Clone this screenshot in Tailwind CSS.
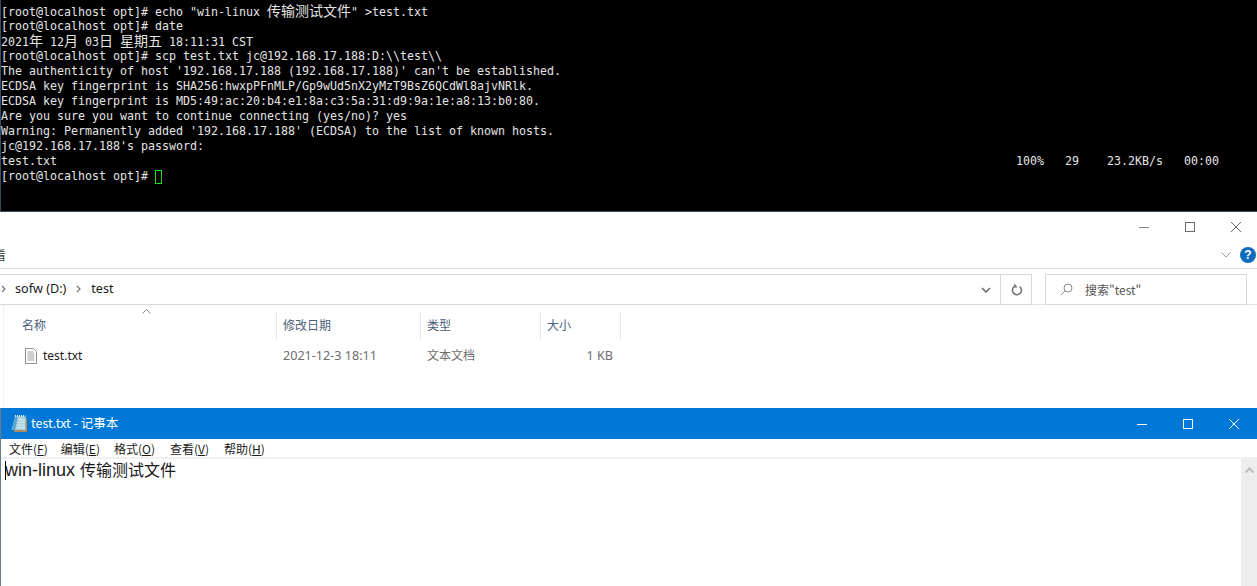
<!DOCTYPE html>
<html lang="zh"><head><meta charset="utf-8">
<script src="https://cdn.jsdelivr.net/npm/@tailwindcss/browser@4"></script>
</head>
<body class="w-[1257px] h-[586px] overflow-hidden bg-white flex flex-col font-['Noto_Sans_CJK_SC',sans-serif]">
<!-- terminal -->
<section class="h-[212px] shrink-0 bg-black border-b border-l border-[#3c4a5c] pt-[4px] text-[#e4e4e4] font-['DejaVu_Sans_Mono','Noto_Sans_CJK_SC',monospace] text-[11.63px] leading-[15px]">
<div class="h-[15px] whitespace-pre">[root@localhost opt]# echo "win-linux <span class="text-[14px]">传输测试文件</span>" &gt;test.txt</div>
<div class="h-[15px] whitespace-pre">[root@localhost opt]# date</div>
<div class="h-[15px] whitespace-pre">2021<span class="text-[14px]">年</span> 12<span class="text-[14px]">月</span> 03<span class="text-[14px]">日</span> <span class="text-[14px]">星期五</span> 18:11:31 CST</div>
<div class="h-[15px] whitespace-pre">[root@localhost opt]# scp test.txt jc@192.168.17.188:D:\\test\\</div>
<div class="h-[15px] whitespace-pre">The authenticity of host '192.168.17.188 (192.168.17.188)' can't be established.</div>
<div class="h-[15px] whitespace-pre">ECDSA key fingerprint is SHA256:hwxpPFnMLP/Gp9wUd5nX2yMzT9BsZ6QCdWl8ajvNRlk.</div>
<div class="h-[15px] whitespace-pre">ECDSA key fingerprint is MD5:49:ac:20:b4:e1:8a:c3:5a:31:d9:9a:1e:a8:13:b0:80.</div>
<div class="h-[15px] whitespace-pre">Are you sure you want to continue connecting (yes/no)? yes</div>
<div class="h-[15px] whitespace-pre">Warning: Permanently added '192.168.17.188' (ECDSA) to the list of known hosts.</div>
<div class="h-[15px] whitespace-pre">jc@192.168.17.188's password:</div>
<div class="h-[15px] flex whitespace-pre"><span class="w-[1015px]">test.txt</span><span>100%   29    23.2KB/s   00:00</span></div>
<div class="h-[15px] flex items-center whitespace-pre">[root@localhost opt]# <span class="w-[7px] h-[14px] border border-[#19e619]"></span></div>
</section>
<!-- explorer -->
<section class="h-[196px] shrink-0 bg-white flex flex-col relative">
  <div class="h-[30px] flex justify-end items-center shrink-0">
    <div class="flex items-center h-full mr-[-2px]">
      <svg class="w-[46px] h-[14px]" viewBox="0 0 46 14"><path d="M18 7.5h10" stroke="#8a8a8a" fill="none"/></svg>
      <svg class="w-[46px] h-[14px]" viewBox="0 0 46 14"><rect x="18.5" y="2.5" width="9" height="9" stroke="#6b6b6b" fill="none"/></svg>
      <svg class="w-[46px] h-[14px]" viewBox="0 0 46 14"><path d="M18 2l10 10M28 2L18 12" stroke="#6b6b6b" fill="none"/></svg>
    </div>
  </div>
  <div class="h-[27px] flex items-center justify-between shrink-0 border-b border-[#d9d9d9] pr-[1px]">
    <span class="text-[12px] text-[#333] w-[6px] overflow-hidden flex justify-end">看</span>
    <div class="flex items-center gap-[8px]">
      <svg class="w-[12px] h-[8px]" viewBox="0 0 12 8"><path d="M1.5 1.5L6 6l4.5-4.5" stroke="#9a9a9a" fill="none"/></svg>
      <span class="w-[16px] h-[16px] rounded-full bg-[#0f6cbd] text-white text-[12px] font-bold leading-[16px] text-center font-['Liberation_Sans',sans-serif]">?</span>
    </div>
  </div>
  <div class="h-[36px] flex items-start pt-[5px] shrink-0 border-b border-[#e3e3e3]">
    <div class="w-[1032px] h-[31px] border border-l-0 border-[#d9d9d9] flex items-center">
      <div class="flex-1 flex items-center text-[12.6px] text-[#1a1a1a] font-['Noto_Sans',sans-serif]">
        <svg class="w-[5px] h-[8px] ml-[1px] mr-[9px]" viewBox="0 0 5 8"><path d="M1 1l3 3-3 3" stroke="#777" stroke-width="1.2" fill="none"/></svg>
        <span>sofw (D:)</span>
        <svg class="w-[5px] h-[8px] ml-[10px] mr-[10px]" viewBox="0 0 5 8"><path d="M1 1l3 3-3 3" stroke="#777" stroke-width="1.2" fill="none"/></svg>
        <span>test</span>
      </div>
      <svg class="w-[10px] h-[6px] mr-[9px]" viewBox="0 0 10 6"><path d="M1 1l4 4 4-4" stroke="#666" stroke-width="1.5" fill="none"/></svg>
      <div class="w-[31px] h-full border-l border-[#d9d9d9] flex items-center justify-center pl-[1px]">
        <svg class="w-[12px] h-[13px]" viewBox="0 0 12 13"><path d="M3.6 3.4A4.5 4.5 0 1 0 8.6 3.6" stroke="#707070" stroke-width="1.5" fill="none"/><path d="M3.2 .6v4h3.6z" fill="#707070"/></svg>
      </div>
    </div>
    <div class="ml-[13px] w-[202px] h-[31px] border border-[#d9d9d9] flex items-center text-[12px] text-[#555]">
      <svg class="w-[13px] h-[13px] ml-[14px] mr-[12px]" viewBox="0 0 13 13"><circle cx="8" cy="5" r="4" stroke="#8a8a8a" fill="none"/><path d="M5 8L1 12" stroke="#a08a78" fill="none"/></svg>
      <span>搜索"test"</span>
    </div>
  </div>
  <div class="flex-1 ml-[3px] border-l border-[#f1f1f1] relative">
    <div class="flex h-[28px] mt-[7px] text-[12px] text-[#4c607a]">
      <div class="w-[273px] pl-[18px] leading-[26px] border-r border-[#e5e5e5]">名称</div>
      <div class="w-[144px] pl-[6px] leading-[26px] border-r border-[#e5e5e5]">修改日期</div>
      <div class="w-[120px] pl-[6px] leading-[26px] border-r border-[#e5e5e5]">类型</div>
      <div class="w-[80px] pl-[6px] leading-[26px] border-r border-[#e5e5e5]">大小</div>
    </div>
    <svg class="absolute left-[138px] top-[4px] w-[9px] h-[5px]" viewBox="0 0 9 5"><path d="M.5 4.5l4-4 4 4" stroke="#888" fill="none"/></svg>
    <div class="flex items-center h-[22px] mt-[5px] text-[12.6px] text-[#6d6d6d] font-['Noto_Sans','Noto_Sans_CJK_SC',sans-serif]">
      <div class="w-[273px] flex items-center pl-[21px] text-[#1a1a1a]">
        <svg class="w-[12px] h-[16px] mr-[6px] shrink-0" viewBox="0 0 12 16"><path d="M.5.5h8l3 3v12H.5z" fill="#fff" stroke="#8c8c8c"/><path d="M2.5 4h6M2.5 6h7M2.5 8h7M2.5 10h7M2.5 12h7" stroke="#a0a0a0"/></svg>
        <span class="text-[12px]">test.txt</span>
      </div>
      <div class="w-[144px] pl-[6px]">2021-12-3 18:11</div>
      <div class="w-[120px] pl-[6px] text-[12px]">文本文档</div>
      <div class="w-[72px] text-right">1 KB</div>
    </div>
  </div>
</section>
<!-- notepad -->
<section class="flex-1 min-h-0 flex flex-col border-l border-[#6c7a8a] shadow-[0_-2px_5px_rgba(0,0,0,0.18)]">
  <div class="h-[31px] shrink-0 bg-[#0078d7] flex items-center text-white text-[12px]">
    <svg class="w-[16px] h-[17px] ml-[10px] mr-[4px]" viewBox="0 0 16 17"><path d="M5 3h11v14H3z" fill="#b08a5c"/><path d="M4 1.5h10.5v13.5H.5z" fill="#a9d3e0"/><path d="M4 1.5h3L4 15H.5z" fill="#5aa5cf"/><path d="M7 5h7M7 7.5h7M6.5 10h7.5M6 12.5h8" stroke="#d6ebf0"/><path d="M4 1h10.5" stroke="#e8eef2" stroke-width="2" stroke-dasharray="1 1"/></svg>
    <span class="flex-1 text-[12.5px]">test.txt - 记事本</span>
    <svg class="w-[46px] h-[14px]" viewBox="0 0 46 14"><path d="M18 7.5h10" stroke="#fff" fill="none"/></svg>
    <svg class="w-[46px] h-[14px]" viewBox="0 0 46 14"><rect x="18.5" y="2.5" width="9" height="9" stroke="#fff" fill="none"/></svg>
    <svg class="w-[46px] h-[14px]" viewBox="0 0 46 14"><path d="M18 2l10 10M28 2L18 12" stroke="#fff" fill="none"/></svg>
  </div>
  <div class="h-[18px] shrink-0 flex items-center pl-[8px] pt-[2px] gap-[14px] text-[12px] text-[#1a1a1a]">
    <span>文件(<u>F</u>)</span><span class="ml-[-1px]">编辑(<u>E</u>)</span><span>格式(<u>O</u>)</span><span class="ml-[1px]">查看(<u>V</u>)</span><span class="ml-[1px]">帮助(<u>H</u>)</span>
  </div>
  <div class="flex-1 min-h-0 flex border-t-2 border-[#f0f0f0]">
    <div class="flex-1 pl-[4px] pt-[1px] text-[18px] leading-[20px] text-[#1a1a1a] font-['Liberation_Sans','Noto_Sans_CJK_SC',sans-serif] relative">
      <span class="absolute left-[4px] top-[2px] w-[1px] h-[19px] bg-black"></span>win-linux <span class="text-[16px]">传输测试文件</span>
    </div>
    <div class="w-[16px] bg-[#eeeeee] flex justify-center pt-[8px]">
      <svg class="w-[9px] h-[7px]" viewBox="0 0 9 7"><path d="M.5 5.5l4-4 4 4" stroke="#bcbcbc" stroke-width="2" fill="none"/></svg>
    </div>
  </div>
</section>
</body></html>
